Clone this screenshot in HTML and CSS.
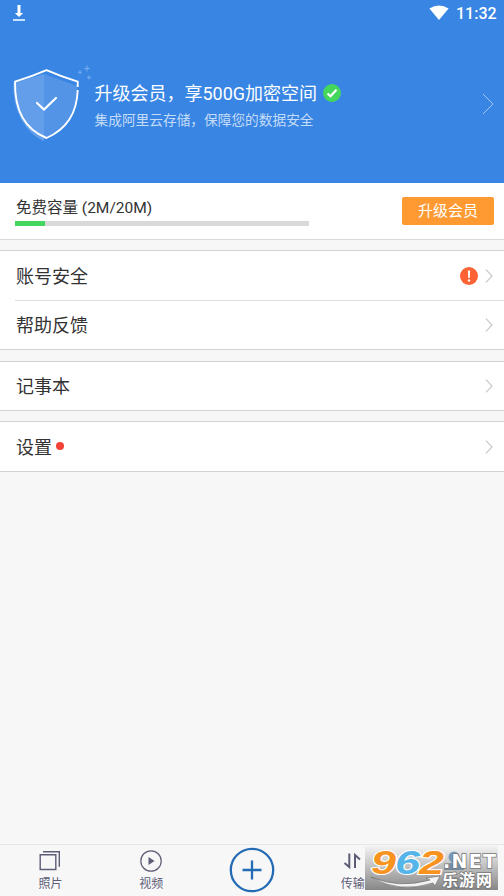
FILE: index.html
```html
<!DOCTYPE html>
<html lang="zh-CN">
<head>
<meta charset="utf-8">
<title>我的</title>
<link rel="stylesheet" href="styles.css">
</head>
<body>
<header class="hero">
  <div class="status">
    <svg class="download" width="14" height="18" viewBox="0 0 14 18"><path d="M5.500 0h3v8h2.700L7 12 2.800 8h2.700z" fill="#fff"/><path d="M1 15h12" stroke="#d8ebff" stroke-width="1.800"/></svg>
    <svg class="wifi" width="20" height="16" viewBox="0 0 20 16"><path d="M.4 3.400Q10-2.600 19.600 3.400L10 15z" fill="#fff"/></svg>
    <span class="clock">11:32</span>
  </div>
  <div class="promo">
    <svg class="shield" width="84" height="80" viewBox="0 0 84 80">
      <path d="M5.500 18L36 9v67C20 70 4 48 5.500 18z" fill="#639eea"/>
      <path d="M36 9l33 12c1 23-13 47-33 53z" fill="#5394e7"/>
      <path d="M69.700 22V16.600Q54 12 38.500 5.200 23 12 7 16.600C6.500 46 18 65 38.500 73 59 64 69 48 69.700 25" fill="none" stroke="#fff" stroke-width="1.900"/>
      <path d="M29 38l7 6.500L48 33" fill="none" stroke="#fff" stroke-width="2.200" stroke-linecap="round"/>
      <path d="M79 .5v6M76 3.500h6M72 5.300v4M70 7.300h4M81 10.500v4M79 12.500h4" stroke="#75abef" stroke-width="1.100"/>
    </svg>
    <div class="promo-text">
      <div class="promo-title">升级会员，享500G加密空间
        <svg width="18" height="18" viewBox="0 0 18 18"><circle cx="9" cy="9" r="9" fill="#45d65d"/><path d="M4.500 9.500l3 2.700 6-6.500" fill="none" stroke="#fff" stroke-width="2.200"/></svg>
      </div>
      <div class="promo-sub">集成阿里云存储，保障您的数据安全</div>
    </div>
    <svg class="promo-arrow" width="12" height="22" viewBox="0 0 12 22"><path d="M1 1l10 10L1 21" fill="none" stroke="#a5c8f4"/></svg>
  </div>
</header>
<main>
  <section class="capacity">
    <div>
      <div class="capacity-label">免费容量 (2M/20M)</div>
      <div class="bar"><div class="bar-fill"></div></div>
    </div>
    <button class="upgrade">升级会员</button>
  </section>
  <section class="group">
    <div class="row"><span class="label">账号安全</span>
      <svg class="alert" width="18" height="18" viewBox="0 0 18 18"><circle cx="9" cy="9" r="9" fill="#fc6233"/><path d="M7.900 3.500h2.200L9.800 11H8.200z" fill="#fff"/><circle cx="9" cy="13.500" r="1.200" fill="#fff"/></svg>
      <svg class="chevron" width="8" height="14" viewBox="0 0 8 14"><path d="M1 .7L7 7 1 13.300"/></svg>
    </div>
    <div class="divider"></div>
    <div class="row short"><span class="label">帮助反馈</span>
      <svg class="chevron" width="8" height="14" viewBox="0 0 8 14"><path d="M1 .7L7 7 1 13.300"/></svg>
    </div>
  </section>
  <section class="group">
    <div class="row short"><span class="label">记事本</span>
      <svg class="chevron" width="8" height="14" viewBox="0 0 8 14"><path d="M1 .7L7 7 1 13.300"/></svg>
    </div>
  </section>
  <section class="group">
    <div class="row"><span class="label">设置</span><span class="dot"></span>
      <svg class="chevron" width="8" height="14" viewBox="0 0 8 14"><path d="M1 .7L7 7 1 13.300"/></svg>
    </div>
  </section>
</main>
<nav class="tabs">
  <a class="tab"><svg width="22" height="22" viewBox="0 0 22 22"><path d="M1.200 4.800h15.600v14.700H1.200zM4 1.800h16.300v15" fill="none" stroke="#5d5d78" stroke-width="1.400"/></svg><span>照片</span></a>
  <a class="tab"><svg width="22" height="22" viewBox="0 0 22 22"><circle cx="11" cy="11" r="10.200" fill="none" stroke="#5d5d78" stroke-width="1.200"/><path d="M8.500 7v8l6-4z" fill="#5d5d78"/></svg><span>视频</span></a>
  <a class="tab"><svg class="plus" width="46" height="46" viewBox="0 0 46 46"><circle cx="23" cy="23" r="21.200" fill="none" stroke="#236cb5" stroke-width="2.300"/><path d="M23 13.500v19M13.500 23h19" stroke="#236cb5" stroke-width="2.300"/></svg></a>
  <a class="tab"><svg width="22" height="22" viewBox="0 0 22 22"><path d="M7.300 3.500v13.500L2.500 13M13 18V5l5 4.500" fill="none" stroke="#5d5d78" stroke-width="2"/></svg><span>传输</span></a>
  <a class="tab"><svg width="22" height="22" viewBox="0 0 22 22"><circle cx="11" cy="7" r="5.500" fill="#236cb5"/><path d="M1 20q1-7 10-8 9 1 10 8z" fill="#236cb5"/></svg><span class="active">我</span></a>
</nav>
<div class="watermark">
  <svg width="133" height="44" viewBox="0 0 133 44">
    <text class="digits orange" x="6" y="28" textLength="25" lengthAdjust="spacingAndGlyphs">9</text>
    <text class="digits blue" x="30" y="28" textLength="25" lengthAdjust="spacingAndGlyphs">6</text>
    <text class="digits orange" x="54" y="28" textLength="25" lengthAdjust="spacingAndGlyphs">2</text>
    <path d="M6 31Q34 43 65 34l-4-2 14-2-5 10-2-3Q34 48 6 31z" fill="#f2f2f2" stroke="#666" stroke-width=".6"/>
    <text class="net" x="78" y="22" textLength="53" lengthAdjust="spacing">.NET</text>
    <text class="site" x="77" y="40" textLength="50">乐游网</text>
  </svg>
</div>
</body>
</html>
```
FILE: styles.css
```css
* { box-sizing: border-box; }
body {
  margin: 0;
  height: 896px;
  display: flex;
  flex-direction: column;
  position: relative;
  overflow: hidden;
  background: #f7f7f7;
  color: #333;
  font-family: Roboto, "Noto Sans CJK SC", sans-serif;
}
svg { display: block; flex: none; }
.hero { height: 183px; background: #3985e3; color: #fff; }
.status { height: 27px; display: flex; align-items: center; padding: 0 9px 0 12px; }
.wifi { margin-left: auto; margin-top: -2px; }
.clock { margin-left: 7px; font-size: 16px; font-weight: 500; width: 39px; white-space: nowrap; }
.promo { display: flex; align-items: flex-start; padding: 37px 10px 0 8px; }
.promo-text { margin: 15px 0 0 2.5px; }
.shield { margin-top: 1px; }
.promo-title { display: flex; align-items: center; gap: 5.5px; font-size: 18px; line-height: 28px; padding-top: 1px; white-space: nowrap; }
.promo-title svg { margin-top: -3px; }
.promo-sub { font-size: 13.7px; line-height: 24px; color: #c4dcf8; white-space: nowrap; }
.promo-arrow { margin: 29px 0 0 auto; }
.capacity {
  height: 57px;
  display: flex;
  justify-content: space-between;
  padding: 14px 10px 0 15px;
  background: #fff;
  border-bottom: 1px solid #d9d9d9;
}
.capacity-label { font-size: 15.5px; line-height: 22px; padding-left: 1px; }
.bar { width: 294px; height: 5px; margin-top: 2px; background: #d9d9d9; }
.bar-fill { width: 30px; height: 5px; background: #45d65d; }
.upgrade {
  width: 92px; height: 28px; padding: 1px 0 0;
  border: 0; border-radius: 2px;
  background: #ff9a33; color: #fff;
  font: 15px/27px Roboto, "Noto Sans CJK SC", sans-serif;
}
.group { margin-top: 10px; background: #fff; border: solid #d2d2d2; border-width: 1px 0; }
.group:nth-child(3) { margin-top: 11px; }
.row { height: 49px; display: flex; align-items: center; padding: 0 11px 0 16px; font-size: 18px; }
.label { padding-bottom: 2px; }
.short { height: 48px; }
.divider { height: 1px; margin-left: 15px; background: #ddd; }
.chevron { margin-left: auto; fill: none; stroke: #c8c8c8; stroke-width: 1.2; }
.alert { margin-left: auto; }
.alert + .chevron { margin-left: 7px; }
.dot { width: 8px; height: 8px; margin: -1px 0 0 4px; border-radius: 50%; background: #f44336; }
.tabs {
  height: 52px; margin-top: auto;
  display: grid; grid-template-columns: repeat(5, 1fr);
  border-top: 1px solid #e7e7e7;
  color: #5d5d78; font-size: 12px; line-height: 18px;
}
.tab { display: flex; flex-direction: column; align-items: center; padding-top: 5px; }
.tab span { margin-top: 3px; }
.plus { margin-top: -3px; }
.active { color: #236cb5; }
.watermark {
  position: absolute; left: 365px; top: 846px; width: 133px; height: 44px;
  background: linear-gradient(rgba(238,238,238,.45), rgba(115,115,115,.85));
}
.digits { font: italic 700 33px "Liberation Sans", sans-serif; stroke: #fff; stroke-width: 2px; paint-order: stroke; }
.orange { fill: #f7931e; }
.blue { fill: #55b4e8; }
.net { font: 700 19px "DejaVu Sans", sans-serif; fill: #fff; stroke: #777; stroke-width: 1.5px; paint-order: stroke; }
.site { font: 700 16px "Noto Sans CJK SC", sans-serif; fill: #fff; stroke: #777; stroke-width: 1.5px; paint-order: stroke; }
```
